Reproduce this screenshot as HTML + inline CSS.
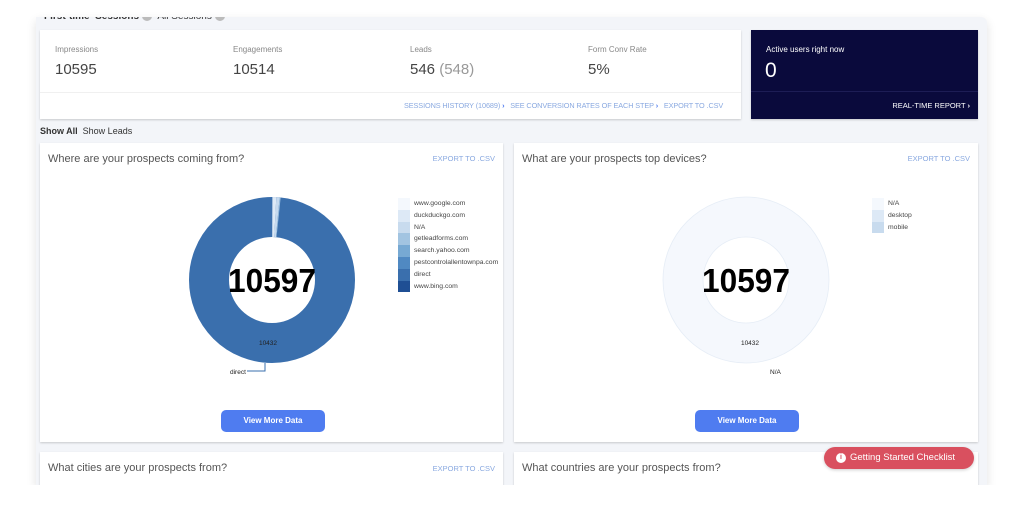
<!DOCTYPE html>
<html><head><meta charset="utf-8"><style>
*{margin:0;padding:0;box-sizing:border-box}
body{width:1024px;height:508px;background:#fff;font-family:"Liberation Sans",sans-serif;position:relative;overflow:hidden}
.abs{position:absolute}
.wrap{position:absolute;left:36px;top:17px;width:951px;height:468px;background:#f3f5f9;box-shadow:0 4px 10px rgba(0,0,0,.12);overflow:hidden;border-top-right-radius:6px}
.card{position:absolute;background:#fff;box-shadow:0 1px 2px rgba(0,0,0,.18)}
.lbl{position:absolute;font-size:8px;color:#888}
.val{position:absolute;font-size:15px;color:#444}
.link{position:absolute;font-size:7.3px;color:#8aa9e0;white-space:nowrap;letter-spacing:-.1px}
.title{position:absolute;font-size:11px;color:#555}
.exp{position:absolute;font-size:7.5px;color:#8aa9e0}
.btn{position:absolute;width:104px;height:22px;background:#4f7cf0;border-radius:5px;color:#fff;font-size:8px;font-weight:bold;text-align:center;line-height:22px}
.leg{position:absolute;font-size:6.8px;color:#444}
.leg div{height:11.8px;line-height:11.8px;position:relative;padding-left:16px}
.leg span{position:absolute;left:0;top:0;width:12px;height:11.8px}
</style></head><body>
<div class="wrap">
<div class="abs" style="left:8px;top:-6px;font-size:10px;font-weight:bold;color:#333">First-time&nbsp; Sessions <span style="display:inline-block;width:10px;height:10px;border-radius:50%;background:#bbb;vertical-align:middle"></span> &nbsp;<span style="font-weight:normal">All Sessions</span> <span style="display:inline-block;width:10px;height:10px;border-radius:50%;background:#bbb;vertical-align:middle"></span></div>
</div>
<div class="card" style="left:40px;top:30px;width:701px;height:89px">
<div class="abs" style="left:0;top:62px;width:701px;height:1px;background:#f0f0f0"></div>
<div class="lbl" style="left:15px;top:15px">Impressions</div><div class="val" style="left:15px;top:31px">10595</div>
<div class="lbl" style="left:193px;top:15px">Engagements</div><div class="val" style="left:193px;top:31px">10514</div>
<div class="lbl" style="left:370px;top:15px">Leads</div><div class="val" style="left:370px;top:31px">546 <span style="color:#999">(548)</span></div>
<div class="lbl" style="left:548px;top:15px">Form Conv Rate</div><div class="val" style="left:548px;top:31px">5%</div>
<div class="link" style="left:364px;top:71px">SESSIONS HISTORY (10689) <b style="color:#4f7cf0">›</b> &nbsp; SEE CONVERSION RATES OF EACH STEP <b style="color:#4f7cf0">›</b> &nbsp; EXPORT TO .CSV</div>
</div>
<div class="card" style="left:751px;top:30px;width:227px;height:89px;background:#0a0a3c">
<div class="abs" style="left:0;top:61px;width:227px;height:1px;background:#1d1d55"></div>
<div class="abs" style="left:15px;top:15px;font-size:8px;color:#fff">Active users right now</div>
<div class="abs" style="left:14px;top:29px;font-size:21px;color:#fff">0</div>
<div class="abs" style="right:8px;top:71px;font-size:7.5px;color:#fff">REAL-TIME REPORT <b>›</b></div>
</div>
<div class="abs" style="left:40px;top:126px;font-size:9px;color:#333"><b>Show All</b>&nbsp; Show Leads</div>

<div class="card" style="left:40px;top:143px;width:463px;height:299px">
<div class="title" style="left:8px;top:10px">Where are your prospects coming from?</div>
<div class="exp" style="right:8px;top:11px">EXPORT TO .CSV</div>
<svg class="abs" style="left:0;top:0" width="463" height="299">
<g transform="translate(232,137) rotate(-90)">
<circle r="63" fill="none" stroke="#3a6fad" stroke-width="40"/>
<circle r="63" fill="none" stroke="#dde9f6" stroke-width="40" stroke-dasharray="3 400" stroke-dashoffset="-0.3"/>
<circle r="63" fill="none" stroke="#c5d9ee" stroke-width="40" stroke-dasharray="2.5 400" stroke-dashoffset="-3.3"/>
<circle r="63" fill="none" stroke="#9cc0e0" stroke-width="40" stroke-dasharray="0.8 400" stroke-dashoffset="-5.8"/>
</g>
<polyline points="225,220 225,228 207,228" fill="none" stroke="#3a6fad" stroke-width="1"/>
<text x="232" y="149" text-anchor="middle" font-size="33" font-weight="bold" fill="#000" font-family="Liberation Sans" textLength="88" lengthAdjust="spacingAndGlyphs">10597</text>
<text x="228" y="202" text-anchor="middle" font-size="6.5" fill="#222" font-family="Liberation Sans">10432</text>
<text x="190" y="231" font-size="6.5" fill="#222" font-family="Liberation Sans">direct</text>
</svg>
<div class="leg" style="left:358px;top:55px">
<div><span style="background:#f4f8fd"></span>www.google.com</div>
<div><span style="background:#dde9f6"></span>duckduckgo.com</div>
<div><span style="background:#c8dbee"></span>N/A</div>
<div><span style="background:#a2c4e1"></span>getleadforms.com</div>
<div><span style="background:#77a9d3"></span>search.yahoo.com</div>
<div><span style="background:#5089c2"></span>pestcontrolallentownpa.com</div>
<div><span style="background:#3a6fad"></span>direct</div>
<div><span style="background:#1f4f94"></span>www.bing.com</div>
</div>
<div class="btn" style="left:181px;top:267px">View More Data</div>
</div>

<div class="card" style="left:514px;top:143px;width:464px;height:299px">
<div class="title" style="left:8px;top:10px">What are your prospects top devices?</div>
<div class="exp" style="right:8px;top:11px">EXPORT TO .CSV</div>
<svg class="abs" style="left:0;top:0" width="464" height="299">
<g transform="translate(232,137) rotate(-90)">
<circle r="63" fill="none" stroke="#f5f8fd" stroke-width="40"/>
<circle r="83" fill="none" stroke="#e6edf6" stroke-width="0.8"/>
<circle r="43" fill="none" stroke="#e6edf6" stroke-width="0.8"/>
<circle r="63" fill="none" stroke="#d6e3f2" stroke-width="40" stroke-dasharray="5 400" stroke-dashoffset="5.5"/>
</g>
<text x="232" y="149" text-anchor="middle" font-size="33" font-weight="bold" fill="#000" font-family="Liberation Sans" textLength="88" lengthAdjust="spacingAndGlyphs">10597</text>
<text x="236" y="202" text-anchor="middle" font-size="6.5" fill="#222" font-family="Liberation Sans">10432</text>
<text x="256" y="231" font-size="6.5" fill="#222" font-family="Liberation Sans">N/A</text>
</svg>
<div class="leg" style="left:358px;top:55px">
<div><span style="background:#f4f8fd"></span>N/A</div>
<div><span style="background:#dde9f6"></span>desktop</div>
<div><span style="background:#c8dbee"></span>mobile</div>
</div>
<div class="btn" style="left:181px;top:267px">View More Data</div>
</div>

<div class="card" style="left:40px;top:452px;width:463px;height:40px">
<div class="title" style="left:8px;top:10px">What cities are your prospects from?</div>
<div class="exp" style="right:8px;top:12px">EXPORT TO .CSV</div>
</div>
<div class="card" style="left:514px;top:452px;width:464px;height:40px">
<div class="title" style="left:8px;top:10px">What countries are your prospects from?</div>
</div>
<div class="abs" style="left:0;top:485px;width:1024px;height:23px;background:#fff"></div>
<div class="abs" style="left:824px;top:447px;width:150px;height:22px;background:#d9505f;border-radius:11px;color:#fff;font-size:9.5px;line-height:22px;padding-left:26px;box-shadow:0 1px 3px rgba(0,0,0,.2)"><span style="position:absolute;left:12px;top:6px;width:10px;height:10px;border-radius:50%;background:#fff;color:#d9505f;font-size:7px;line-height:10px;text-align:center;font-weight:bold">i</span>Getting Started Checklist</div>
</body></html>
